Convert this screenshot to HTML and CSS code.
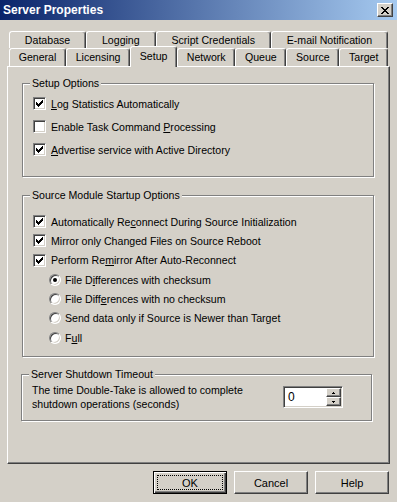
FILE: index.html
```html
<!DOCTYPE html>
<html lang="en">

<head>
    <meta charset="UTF-8">
    <title>Server Properties</title>
    <link rel="stylesheet" href="styles.css">
</head>

<body>
    <div class="window">
        <!-- Title bar -->
        <div class="titlebar">
            <span class="title">Server Properties</span>
            <button class="close-btn">
                <svg width="8" height="7" viewBox="0 0 8 7" shape-rendering="crispEdges">
                    <path fill="#000" d="M0 0h2v1h-2z M6 0h2v1h-2z M1 1h2v1h-2z M5 1h2v1h-2z M2 2h4v1h-4z M3 3h2v1h-2z M2 4h4v1h-4z M1 5h2v1h-2z M5 5h2v1h-2z M0 6h2v1h-2z M6 6h2v1h-2z"/>
                </svg>
            </button>
        </div>

        <!-- Tabs -->
        <div class="tabs">
            <div class="tab-row">
                <div class="tab">Database</div>
                <div class="tab">Logging</div>
                <div class="tab">Script Credentials</div>
                <div class="tab">E-mail Notification</div>
            </div>
            <div class="tab-row front">
                <div class="tab">General</div>
                <div class="tab">Licensing</div>
                <div class="tab active">Setup</div>
                <div class="tab">Network</div>
                <div class="tab">Queue</div>
                <div class="tab">Source</div>
                <div class="tab">Target</div>
            </div>
        </div>

        <div class="panel">
            <!-- Setup Options -->
            <div class="group setup">
                <div class="group-title">Setup Options</div>
                <div class="rows">
                    <div class="check"><span class="box checked"><svg width="11" height="11" viewBox="1 1 11 11" shape-rendering="crispEdges"><path d="M9 3h1v3h-1z M8 4h1v3h-1z M7 5h1v3h-1z M6 6h1v3h-1z M5 7h1v3h-1z M4 6h1v3h-1z M3 5h1v3h-1z"/></svg></span><span><u>L</u>og Statistics Automatically</span></div>
                    <div class="check"><span class="box"></span><span>Enable Task Command <u>P</u>rocessing</span></div>
                    <div class="check"><span class="box checked"><svg width="11" height="11" viewBox="1 1 11 11" shape-rendering="crispEdges"><path d="M9 3h1v3h-1z M8 4h1v3h-1z M7 5h1v3h-1z M6 6h1v3h-1z M5 7h1v3h-1z M4 6h1v3h-1z M3 5h1v3h-1z"/></svg></span><span><u>A</u>dvertise service with Active Directory</span></div>
                </div>
            </div>

            <!-- Source Module Startup Options -->
            <div class="group source">
                <div class="group-title">Source Module Startup Options</div>
                <div class="rows">
                    <div class="check"><span class="box checked"><svg width="11" height="11" viewBox="1 1 11 11" shape-rendering="crispEdges"><path d="M9 3h1v3h-1z M8 4h1v3h-1z M7 5h1v3h-1z M6 6h1v3h-1z M5 7h1v3h-1z M4 6h1v3h-1z M3 5h1v3h-1z"/></svg></span><span>Automatically Re<u>c</u>onnect During Source Initialization</span></div>
                    <div class="check"><span class="box checked"><svg width="11" height="11" viewBox="1 1 11 11" shape-rendering="crispEdges"><path d="M9 3h1v3h-1z M8 4h1v3h-1z M7 5h1v3h-1z M6 6h1v3h-1z M5 7h1v3h-1z M4 6h1v3h-1z M3 5h1v3h-1z"/></svg></span><span>Mirror only Changed Files on Source Reboot</span></div>
                    <div class="check"><span class="box checked"><svg width="11" height="11" viewBox="1 1 11 11" shape-rendering="crispEdges"><path d="M9 3h1v3h-1z M8 4h1v3h-1z M7 5h1v3h-1z M6 6h1v3h-1z M5 7h1v3h-1z M4 6h1v3h-1z M3 5h1v3h-1z"/></svg></span><span>Perform Re<u>m</u>irror After Auto-Reconnect</span></div>
                    <div class="radio"><span class="dot selected"></span><span>File D<u>i</u>fferences with checksum</span></div>
                    <div class="radio"><span class="dot"></span><span>File Diff<u>e</u>rences with no checksum</span></div>
                    <div class="radio"><span class="dot"></span><span>Send data only if Source is Newer than Target</span></div>
                    <div class="radio"><span class="dot"></span><span>F<u>u</u>ll</span></div>
                </div>
            </div>

            <!-- Server Shutdown Timeout -->
            <div class="group shutdown">
                <div class="group-title">Server Shutdown Timeout</div>
                <div class="timeout-row">
                    <div class="timeout-text">The time Double-Take is allowed to complete<br>shutdown operations (seconds)</div>
                    <div class="spin">
                        <div class="spin-value">0</div>
                        <div class="spin-buttons">
                            <span class="spin-btn"><svg width="3" height="2" viewBox="0 0 3 2" shape-rendering="crispEdges"><path d="M1 0h1v1h-1z M0 1h3v1h-3z"/></svg></span>
                            <span class="spin-btn"><svg width="3" height="2" viewBox="0 0 3 2" shape-rendering="crispEdges"><path d="M0 0h3v1h-3z M1 1h1v1h-1z"/></svg></span>
                        </div>
                    </div>
                </div>
            </div>
        </div>

        <!-- Dialog buttons -->
        <div class="button-group">
            <button class="btn default"><span class="focus">OK</span></button>
            <button class="btn">Cancel</button>
            <button class="btn">Help</button>
        </div>
    </div>
</body>

</html>
```

FILE: styles.css
```css
* {
    box-sizing: border-box;
}

body {
    margin: 0;
    font-family: "Liberation Sans", Arial, sans-serif;
    font-size: 10.6px;
    color: #000;
    background: #d4d0c8;
}

.window {
    width: 397px;
    height: 502px;
    background: #d4d0c8;
    overflow: hidden;
}

/* Title bar */
.titlebar {
    height: 20px;
    display: flex;
    align-items: center;
    justify-content: space-between;
    padding: 0 4px 0 3px;
    background: linear-gradient(to right, #0a246a, #a6caf0);
}

.title {
    color: #fff;
    font-weight: bold;
    font-size: 12px;
}

.close-btn {
    width: 16px;
    height: 14px;
    padding: 0;
    display: flex;
    align-items: center;
    justify-content: center;
    background: #d4d0c8;
    border: 1px solid;
    border-color: #fff #404040 #404040 #fff;
    box-shadow: inset -1px -1px 0 #808080;
}

/* Tabs */
.tabs {
    padding: 11px 0 0 9px;
}

.tab-row {
    display: flex;
    width: 379px;
    height: 17px;
}

.tab-row.front {
    height: 18px;
    align-items: flex-end;
}

.tab {
    flex: 1 1 auto;
    height: 17px;
    padding: 1px 4px 0;
    text-align: center;
    white-space: nowrap;
    line-height: 14px;
    border: 1px solid;
    border-bottom: none;
    border-color: #fff #404040 transparent #fff;
    border-radius: 3px 3px 0 0;
    box-shadow: inset -1px 0 0 #808080;
    background: #d4d0c8;
}

.front .tab {
    height: 18px;
}

.tab.active {
    height: 21px;
    margin-bottom: -1px;
    padding-top: 2px;
    position: relative;
    z-index: 1;
}

/* Panel */
.panel {
    width: 383px;
    height: 398px;
    margin-left: 7px;
    padding: 0 0 0 14px;
    border: 1px solid;
    border-color: #fff #404040 #404040 #fff;
    box-shadow: inset -1px -1px 0 #808080;
    overflow: hidden;
}

.group {
    border: 1px solid #808080;
    box-shadow: 1px 1px 0 #fff, inset 1px 1px 0 #fff;
}

.group-title {
    display: table;
    margin: -7px 0 0 7px;
    padding: 0 2px;
    line-height: 13px;
    background: #d4d0c8;
}

.setup {
    width: 352px;
    margin-top: 16px;
}

.setup .rows {
    padding: 2px 0 15px 10px;
}

.setup .check {
    height: 23px;
}

.source {
    width: 352px;
    margin-top: 18px;
}

.source .rows {
    padding: 10px 0 9px 10px;
}

.source .check,
.source .radio {
    height: 19.33px;
}

.check,
.radio {
    display: flex;
    align-items: center;
    white-space: nowrap;
}

.check {
    gap: 5px;
}

.radio {
    gap: 4px;
    padding-left: 16px;
}

.box {
    width: 13px;
    height: 13px;
    flex: none;
    display: flex;
    background: #fff;
    border: 1px solid;
    border-color: #808080 #fff #fff #808080;
    box-shadow: inset 1px 1px 0 #404040, inset -1px -1px 0 #d4d0c8;
}

.dot {
    width: 12px;
    height: 12px;
    flex: none;
    display: flex;
    align-items: center;
    justify-content: center;
    border-radius: 50%;
    background: #fff;
    border: 1px solid;
    border-color: #808080 #fff #fff #808080;
    box-shadow: inset 1px 1px 0 #404040, inset -1px -1px 0 #d4d0c8;
}

.dot.selected::after {
    content: "";
    width: 4px;
    height: 4px;
    border-radius: 50%;
    background: #000;
}

.shutdown {
    width: 351px;
    margin: 17px 0 0 -1px;
}

.timeout-row {
    display: flex;
    align-items: center;
    justify-content: space-between;
    padding: 2px 28px 9px 10px;
}

.timeout-text {
    line-height: 14px;
}

.spin {
    width: 60px;
    height: 22px;
    display: flex;
    background: #fff;
    border: 1px solid;
    border-color: #808080 #fff #fff #808080;
    box-shadow: inset 1px 1px 0 #404040, inset -1px -1px 0 #d4d0c8;
    padding: 1px;
}

.spin-value {
    flex: 1;
    padding: 2px 0 0 3px;
    font-size: 12px;
}

.spin-buttons {
    width: 15px;
    display: flex;
    flex-direction: column;
}

.spin-btn {
    flex: 1;
    display: flex;
    align-items: center;
    justify-content: center;
    background: #d4d0c8;
    border: 1px solid;
    border-color: #fff #404040 #404040 #fff;
    box-shadow: inset -1px -1px 0 #808080;
}

/* Dialog buttons */
.button-group {
    display: flex;
    justify-content: flex-end;
    gap: 7px;
    margin-top: 7px;
    padding-right: 8px;
}

.btn {
    width: 74px;
    height: 23px;
    padding: 0;
    font-family: inherit;
    font-size: 11px;
    color: #000;
    background: #d4d0c8;
    border: 1px solid;
    border-color: #fff #404040 #404040 #fff;
    box-shadow: inset -1px -1px 0 #808080;
}

.btn.default {
    border: 1px solid #000;
    box-shadow: inset 1px 1px 0 #fff, inset -1px -1px 0 #404040, inset -2px -2px 0 #808080;
    padding: 3px;
}

.focus {
    display: flex;
    align-items: center;
    justify-content: center;
    height: 100%;
    border: 1px dotted #000;
}
```
